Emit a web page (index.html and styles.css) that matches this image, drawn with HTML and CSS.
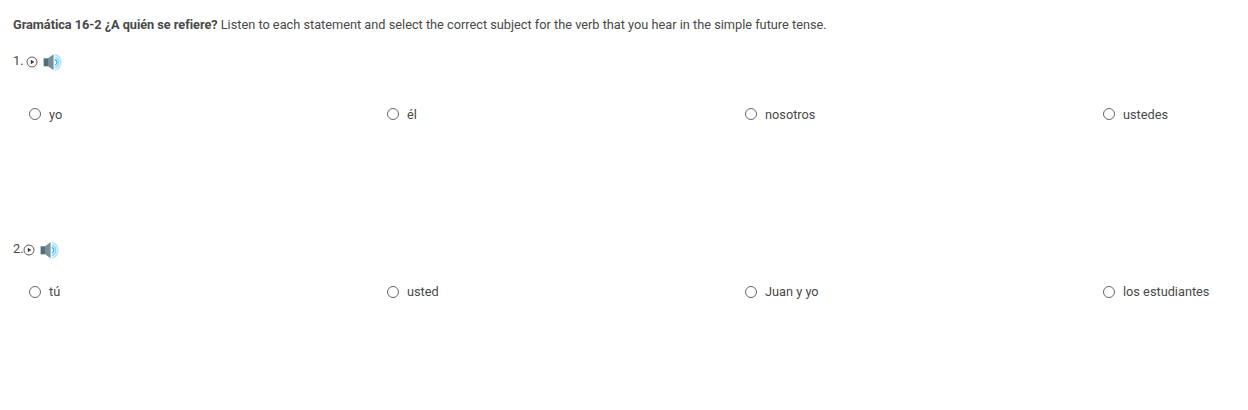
FILE: index.html
```html
<!DOCTYPE html>
<html lang="es">
<head>
<meta charset="utf-8">
<title>Gramática 16-2</title>
<link rel="stylesheet" href="styles.css">
</head>
<body>
<svg class="defs" width="0" height="0">
  <symbol id="play" viewBox="0 0 12 12">
    <circle cx="6" cy="6" r="5" fill="none" stroke="#4a4a4a" stroke-width="0.9"/>
    <path d="M4.8 3.8L8.2 6L4.8 8.2Z" fill="#333"/>
  </symbol>
  <symbol id="speaker" viewBox="0 0 20 18">
    <path d="M0.6 5.3H5V13.3H0.6Z" fill="#546e7a"/>
    <path d="M5 5.3L10.6 1.2V17.2L5 13.3Z" fill="#78909c"/>
    <path d="M12 1.6A8 8 0 0 1 12 17" fill="none" stroke="#b3e5fc" stroke-width="1.7"/>
    <path d="M12 4.1A5.5 5.5 0 0 1 12 14.5" fill="none" stroke="#81d4fa" stroke-width="1.4"/>
    <path d="M11.8 6.5A2.9 2.9 0 0 1 11.8 12.1" fill="none" stroke="#29b6f6" stroke-width="1.3"/>
  </symbol>
</svg>
<main class="exercise">
  <p class="prompt"><strong>Gramática 16-2 ¿A quién se refiere?</strong> Listen to each statement and select the correct subject for the verb that you hear in the simple future tense.</p>
  <section class="question first">
    <div class="audio"><span>1.</span><svg class="play"><use href="#play"/></svg><svg class="speaker"><use href="#speaker"/></svg></div>
    <div class="options">
      <label><input type="radio" name="q1">yo</label><label><input type="radio" name="q1">él</label><label><input type="radio" name="q1">nosotros</label><label><input type="radio" name="q1">ustedes</label>
    </div>
  </section>
  <section class="question second">
    <div class="audio"><span>2.</span><svg class="play"><use href="#play"/></svg><svg class="speaker"><use href="#speaker"/></svg></div>
    <div class="options">
      <label><input type="radio" name="q2">tú</label><label><input type="radio" name="q2">usted</label><label><input type="radio" name="q2">Juan y yo</label><label><input type="radio" name="q2">los estudiantes</label>
    </div>
  </section>
</main>
</body>
</html>
```
FILE: styles.css
```css
body { margin: 0; background: #fff; color: #484848; font: 12.75px/20px Roboto, sans-serif; }
.defs { display: block; }
.exercise { padding: 15px 0 0 13px; }
.prompt { margin: 0; white-space: nowrap; }
.prompt strong { letter-spacing: -0.04px; }
.question { height: 188px; padding-top: 17px; box-sizing: border-box; }
.audio { display: flex; align-items: center; height: 20px; }
.audio span { width: 13px; padding-bottom: 2px; }
.second .audio span { width: 9.5px; }
.play { width: 12px; height: 12px; }
.speaker { width: 20px; height: 18px; margin-left: 5px; }
.options { display: grid; grid-template-columns: repeat(3, 358px) 1fr; margin: 33px 0 0 16px; }
.second .options { margin-top: 22px; }
label { display: flex; align-items: center; white-space: nowrap; }
input { appearance: none; box-sizing: border-box; width: 12px; height: 12px; margin: 0 8px 0 0; border: 1px solid #666; border-radius: 50%; }
.first input { margin-bottom: 2px; }
```
